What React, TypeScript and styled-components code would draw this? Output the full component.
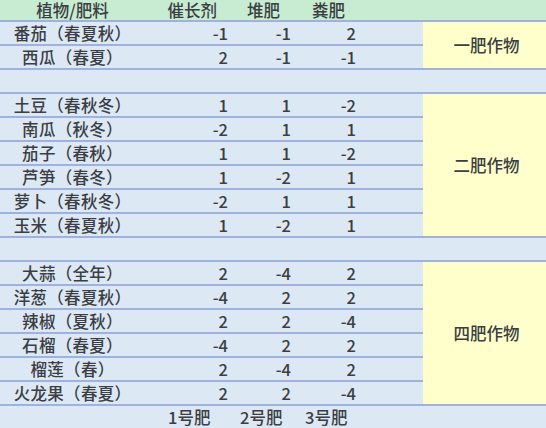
import React from 'react';
import styled, { createGlobalStyle } from 'styled-components';

const GlobalStyle = createGlobalStyle`
  html, body {
    margin: 0;
    padding: 0;
    background: #dde8f5;
  }
  body {
    font-family: 'Noto Sans CJK SC', 'Noto Sans', sans-serif;
    color: #3b3e42;
  }
`;

const LINE = '#9fb2dc';
const BLUE = '#dde8f5';

const Sheet = styled.div`
  width: 546px;
  height: 428px;
  overflow: hidden;
  display: flex;
  flex-direction: column;
  font-size: 16.5px;
  font-weight: 500;
`;

const HeaderRow = styled.div`
  display: grid;
  grid-template-columns: 145px 86px 63px 65px 1fr;
  height: 20px;
  line-height: 20px;
  background: #c7ecd1;
  border-bottom: 2px solid ${LINE};
  align-items: center;
`;

const HeadCell = styled.div<{ $align?: 'center' | 'right' }>`
  text-align: ${(p) => p.$align ?? 'right'};
  padding-right: ${(p) => (p.$align === 'center' ? '0' : '14px')};
  white-space: nowrap;
`;

const Group = styled.div`
  display: grid;
  grid-template-columns: 423px 1fr;
  border-bottom: 2px solid ${LINE};
`;

const Rows = styled.div`
  display: flex;
  flex-direction: column;
`;

const Row = styled.div`
  display: grid;
  grid-template-columns: 145px 86px 63px 65px 64px;
  height: 22px;
  line-height: 22px;
  align-items: center;
  background: ${BLUE};
  & + & {
    border-top: 2px solid ${LINE};
  }
`;

const NameCell = styled.div`
  text-align: center;
  white-space: nowrap;
  letter-spacing: 0.3px;
`;

const NumCell = styled.div`
  text-align: right;
  padding-right: 3px;
`;

const Merged = styled.div`
  background: #ffffcc;
  display: flex;
  align-items: center;
  justify-content: center;
  padding-left: 4px;
`;

const BlankRow = styled.div`
  height: 22px;
  background: ${BLUE};
  border-bottom: 2px solid ${LINE};
`;

const FooterRow = styled.div`
  display: grid;
  grid-template-columns: 168px 72px 65px 1fr;
  height: 22px;
  line-height: 22px;
  align-items: center;
  background: ${BLUE};
`;

type Crop = [string, number, number, number];

const groups: { label: string; crops: Crop[] }[] = [
  {
    label: '一肥作物',
    crops: [
      ['番茄（春夏秋）', -1, -1, 2],
      ['西瓜（春夏）', 2, -1, -1],
    ],
  },
  {
    label: '二肥作物',
    crops: [
      ['土豆（春秋冬）', 1, 1, -2],
      ['南瓜（秋冬）', -2, 1, 1],
      ['茄子（春秋）', 1, 1, -2],
      ['芦笋（春冬）', 1, -2, 1],
      ['萝卜（春秋冬）', -2, 1, 1],
      ['玉米（春夏秋）', 1, -2, 1],
    ],
  },
  {
    label: '四肥作物',
    crops: [
      ['大蒜（全年）', 2, -4, 2],
      ['洋葱（春夏秋）', -4, 2, 2],
      ['辣椒（夏秋）', 2, 2, -4],
      ['石榴（春夏）', -4, 2, 2],
      ['榴莲（春）', 2, -4, 2],
      ['火龙果（春夏）', 2, 2, -4],
    ],
  },
];

export default function App() {
  return (
    <>
      <GlobalStyle />
      <Sheet>
        <HeaderRow>
          <HeadCell $align="center">植物/肥料</HeadCell>
          <HeadCell>催长剂</HeadCell>
          <HeadCell>堆肥</HeadCell>
          <HeadCell>粪肥</HeadCell>
          <div />
        </HeaderRow>
        {groups.map((g, gi) => (
          <React.Fragment key={g.label}>
            {gi > 0 && <BlankRow />}
            <Group>
              <Rows>
                {g.crops.map(([name, a, b, c]) => (
                  <Row key={name}>
                    <NameCell>{name}</NameCell>
                    <NumCell>{a}</NumCell>
                    <NumCell>{b}</NumCell>
                    <NumCell>{c}</NumCell>
                    <div />
                  </Row>
                ))}
              </Rows>
              <Merged>{g.label}</Merged>
            </Group>
          </React.Fragment>
        ))}
        <FooterRow>
          <div />
          <div>1号肥</div>
          <div>2号肥</div>
          <div>3号肥</div>
        </FooterRow>
      </Sheet>
    </>
  );
}
